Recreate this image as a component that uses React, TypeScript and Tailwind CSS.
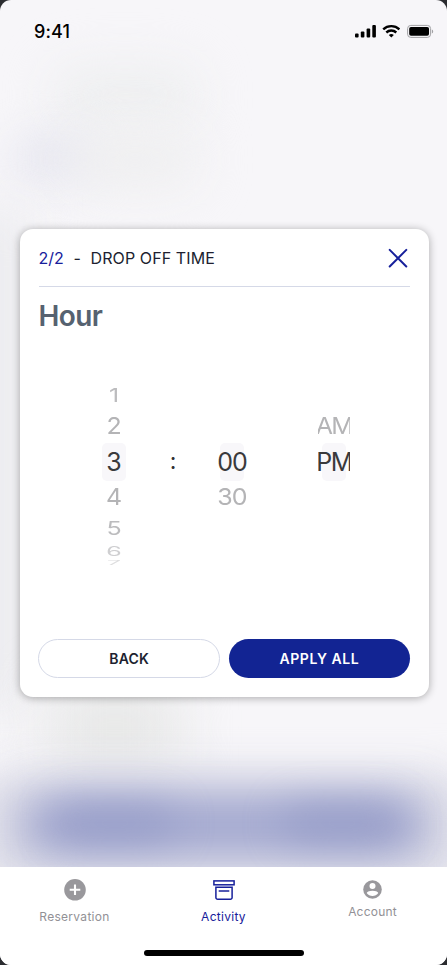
import React, { useState } from 'react';
import clsx from 'clsx';

type Tab = 'Reservation' | 'Activity' | 'Account';

interface WheelItem {
  label: string;
  row: string;
  text: string;
}

// Each row shrinks as it rolls away from the selected one
const HOURS: WheelItem[] = [
  { label: '1', row: 'h-[31px]', text: 'scale-y-[0.76] text-[#bcbcbe]' },
  { label: '2', row: 'h-[31px]', text: 'scale-y-[0.94] text-[#b4b4b6]' },
  { label: '3', row: 'h-[41px]', text: 'text-[#3a3a3c]' },
  { label: '4', row: 'h-[30px]', text: 'scale-y-[0.94] text-[#b4b4b6]' },
  { label: '5', row: 'h-[32px]', text: 'scale-y-[0.76] text-[#bcbcbe]' },
  { label: '6', row: 'h-[13px]', text: 'scale-y-[0.5] text-[#cfcfd1]' },
  { label: '7', row: 'h-[12px]', text: 'scale-y-[0.22] text-[#dededf]' },
];

const MINUTES: WheelItem[] = [
  { label: '00', row: 'h-[41px]', text: 'text-[#3a3a3c]' },
  { label: '30', row: 'h-[30px]', text: 'scale-y-[0.94] text-[#b4b4b6]' },
];

const PERIODS: WheelItem[] = [
  { label: 'AM', row: 'h-[31px]', text: 'scale-y-[0.94] text-[#b4b4b6]' },
  { label: 'PM', row: 'h-[41px]', text: 'text-[#3a3a3c]' },
];

function Wheel({ items, selected, className, textClass }: { items: WheelItem[]; selected: string; className: string; textClass?: string }) {
  return (
    <div className={clsx('flex flex-col items-center', className)}>
      {items.map((item) => (
        <div key={item.label} className={clsx('flex w-full shrink-0 items-center justify-center', item.row)}>
          <div
            className={clsx(
              'flex items-center justify-center',
              item.label === selected && 'h-[38px] w-6 rounded-[5px] bg-[#f8f7fa]',
            )}
          >
            <span className={clsx('text-[25px] leading-[38px] font-normal', item.text, textClass)}>{item.label}</span>
          </div>
        </div>
      ))}
    </div>
  );
}

function StatusBar() {
  return (
    <div className="relative flex h-[63px] items-center justify-between pr-[13px] pl-[34px]">
      <span className="text-[18px] font-medium tracking-[0.15px] text-black">9:41</span>
      <svg width="79" height="15" viewBox="0 0 79 15" fill="black">
        <rect x="0" y="9.5" width="3.6" height="4" rx="1" />
        <rect x="5.8" y="7.5" width="3.6" height="6" rx="1" />
        <rect x="11.6" y="4.5" width="3.6" height="9" rx="1" />
        <rect x="17.3" y="1" width="3.6" height="12.5" rx="1" />
        <g fill="none" stroke="black" strokeWidth="2.4">
          <path d="M28.2 5.3a12 12 0 0 1 16.2 0" />
          <path d="M31.3 8.5a7.4 7.4 0 0 1 10 0" />
        </g>
        <path d="M36.3 13.6l-2.5-2.5a3.8 3.8 0 0 1 5 0z" />
        <rect x="52.6" y="1.4" width="23" height="12" rx="3.2" fill="none" stroke="#a1a1a4" strokeWidth="1" />
        <rect x="54.2" y="3" width="19.8" height="8.8" rx="1.8" />
        <path d="M76.9 5.4c1.7.8 1.7 3.2 0 4z" fill="#a1a1a4" />
      </svg>
    </div>
  );
}

// Out-of-focus page that sits behind the dialog
function Backdrop() {
  return (
    <div className="absolute inset-x-0 top-0 h-[867px] overflow-hidden">
      <div className="absolute top-[65px] left-[50px] h-[60px] w-[150px] rounded-full bg-[#eeeff0] blur-[24px]" />
      <div className="absolute top-[135px] left-[10px] h-[45px] w-[90px] rounded-full bg-[#e7e7f0] blur-[20px]" />
      <div className="absolute top-[130px] left-[70px] h-[60px] w-[130px] rounded-full bg-[#efeff0] blur-[24px]" />
      <div className="absolute top-[210px] -left-[60px] h-[500px] w-[90px] bg-[#ececef] blur-[24px]" />
      <div className="absolute top-[690px] left-[50px] h-[75px] w-[130px] bg-[#e6e7e6] blur-[28px]" />
      <div className="absolute top-[775px] -left-[20px] h-[110px] w-[487px] bg-[#dcdce7] blur-[22px]" />
      <div className="absolute top-[799px] left-[22px] h-[52px] w-[403px] rounded-[20px] bg-[#989ecb] blur-[24px]" />
      <div className="absolute top-[805px] left-[55px] h-[36px] w-[120px] rounded-full bg-[#858dbf] opacity-50 blur-[20px]" />
      <div className="absolute top-[805px] left-[282px] h-[36px] w-[120px] rounded-full bg-[#858dbf] opacity-50 blur-[20px]" />
    </div>
  );
}

const ReservationIcon = () => (
  <svg width="22" height="22" viewBox="0 0 22 22">
    <circle cx="11" cy="10.8" r="10.8" fill="#99989c" />
    <path d="M11 5.5v10.6M5.7 10.8h10.6" stroke="white" strokeWidth="2.1" />
  </svg>
);

const ActivityIcon = () => (
  <svg width="22" height="20" viewBox="0 0 22 20" fill="none" stroke="#17209b" strokeWidth="1.5">
    <rect x="0.9" y="0.9" width="20.2" height="3.9" />
    <path d="M2.9 7.2h16.2v10.2a1.8 1.8 0 0 1-1.8 1.8H4.7a1.8 1.8 0 0 1-1.8-1.8z" />
    <path d="M5.7 11h10.6" />
  </svg>
);

const AccountIcon = () => (
  <svg width="19" height="19" viewBox="0 0 19 19">
    <circle cx="9.5" cy="9.5" r="9.3" fill="#99989c" />
    <circle cx="9.5" cy="6" r="3" fill="white" />
    <path d="M3.7 13.1c1.1-3.2 10.5-3.2 11.6 0-2.5 3.9-9.1 3.9-11.6 0z" fill="white" />
  </svg>
);

function TabBar({ active, onSelect }: { active: Tab; onSelect: (tab: Tab) => void }) {
  const item = (tab: Tab) =>
    clsx('flex w-[149px] flex-col items-center text-[12px] leading-4 font-normal', active === tab ? 'text-[#17209b]' : 'text-[#929196]');

  return (
    <nav className="relative flex h-[98px] flex-col items-center justify-between bg-white pb-[9px]">
      <div className="flex w-full items-start">
        <button className={clsx(item('Reservation'), 'gap-[8px] pt-[12px] tracking-[0.3px]')} onClick={() => onSelect('Reservation')}>
          <ReservationIcon />
          Reservation
        </button>
        <button className={clsx(item('Activity'), 'gap-[9px] pt-[13px] tracking-[0.28px]')} onClick={() => onSelect('Activity')}>
          <ActivityIcon />
          Activity
        </button>
        <button className={clsx(item('Account'), 'gap-[5px] pt-[13px] tracking-[0.2px]')} onClick={() => onSelect('Account')}>
          <AccountIcon />
          Account
        </button>
      </div>
      <div className="h-[6px] w-[160px] rounded-full bg-black" />
    </nav>
  );
}

function TimeDialog() {
  return (
    <section className="relative mt-[166px] ml-5 flex h-[468px] w-[408.5px] flex-col rounded-[13px] bg-white pr-[19px] pl-[18.5px] shadow-[0_1px_9px_rgba(0,0,0,0.32)]">
      <header className="flex h-[58px] shrink-0 items-center justify-between border-b border-[#d5d9e7]">
        <h2 className="flex pt-px text-[16px] text-[#201f30]">
          <span className="w-[35px] text-[#17209b]">2/2</span>
          <span className="w-[17px]">-</span>
          <span className="tracking-[0.1px]">DROP OFF TIME</span>
        </h2>
        <button aria-label="Close" className="mr-[2px]">
          <svg width="20" height="20" viewBox="0 0 20 20" stroke="#17209b" strokeWidth="2" strokeLinecap="round">
            <path d="M1.7 1.9l16.6 16.6M18.3 1.9L1.7 18.5" />
          </svg>
        </button>
      </header>

      <h1 className="mt-[11px] text-[28px] leading-9 font-semibold tracking-[-0.6px] text-[#566270]">Hour</h1>

      <div className="mt-[45px] flex h-[190px] shrink-0">
        <Wheel items={HOURS} selected="3" className="ml-[62.5px] w-[26px]" />
        <div className="ml-[36px] flex w-[20px] justify-center pt-[62px] text-[23px] leading-[41px] text-[#303032]">:</div>
        <Wheel items={MINUTES} selected="00" className="ml-[32px] w-[34px] pt-[62px]" textClass="tracking-[-0.9px]" />
        <Wheel items={PERIODS} selected="PM" className="ml-[69px] w-[32px] overflow-hidden pt-[31px]" textClass="tracking-[-1.6px]" />
      </div>

      <div className="mt-auto mb-[19px] -ml-[0.5px] flex gap-[9px]">
        <button className="h-[39px] flex-1 rounded-full border border-[#d5d9e7] text-[14px] font-semibold tracking-[0.2px] text-[#201f30]">
          BACK
        </button>
        <button className="h-[39px] flex-1 rounded-full bg-[#122493] text-[14px] font-semibold tracking-[0.55px] text-white">
          APPLY ALL
        </button>
      </div>
    </section>
  );
}

export default function App() {
  const [tab, setTab] = useState<Tab>('Activity');

  return (
    <div className="h-[965px] w-[447px] overflow-hidden bg-[#2b2c30] font-['Inter',sans-serif]">
      <main className="relative flex h-full flex-col overflow-hidden rounded-[11px] bg-[#f7f6f9]">
        <Backdrop />
        <StatusBar />
        <TimeDialog />
        <div className="mt-auto">
          <TabBar active={tab} onSelect={setTab} />
        </div>
      </main>
    </div>
  );
}
